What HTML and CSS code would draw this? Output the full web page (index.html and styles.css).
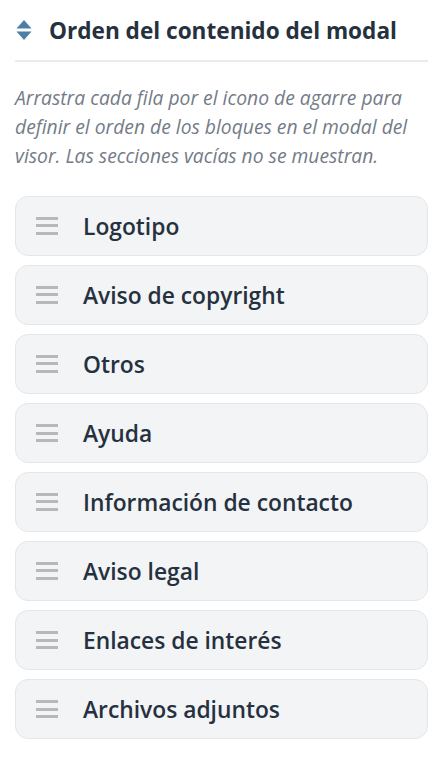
FILE: index.html
```html
<!DOCTYPE html>
<html lang="es">
<head>
    <meta charset="UTF-8">
    <meta name="viewport" content="width=device-width, initial-scale=1.0">
    <title>Orden del contenido del modal</title>
    <link rel="stylesheet" href="styles.css">
</head>
<body>
    <div class="panel">
        <div class="panel-header">
            <svg class="sort-icon" width="16" height="22" viewBox="0 0 16 22">
                <path d="M8 1 L15.5 9.5 H0.5 Z" fill="#4b7fa8"/>
                <path d="M8 21 L15.5 12.5 H0.5 Z" fill="#4b7fa8"/>
            </svg>
            <h2>Orden del contenido del modal</h2>
        </div>

        <p class="hint">Arrastra cada fila por el icono de agarre para definir el orden de los bloques en el modal del visor. Las secciones vacías no se muestran.</p>

        <ul class="order-list">
            <li class="order-item"><span class="grip"></span>Logotipo</li>
            <li class="order-item"><span class="grip"></span>Aviso de copyright</li>
            <li class="order-item"><span class="grip"></span>Otros</li>
            <li class="order-item"><span class="grip"></span>Ayuda</li>
            <li class="order-item"><span class="grip"></span>Información de contacto</li>
            <li class="order-item"><span class="grip"></span>Aviso legal</li>
            <li class="order-item"><span class="grip"></span>Enlaces de interés</li>
            <li class="order-item"><span class="grip"></span>Archivos adjuntos</li>
        </ul>
    </div>
</body>
</html>
```

FILE: styles.css
```css
body {
    margin: 0;
    background-color: #ffffff;
    font-family: "Open Sans", sans-serif;
    color: #263140;
}

.panel {
    padding: 0 14px 0 15px;
}

.panel-header {
    display: flex;
    align-items: center;
    gap: 17px;
    height: 60px;
    border-bottom: 2px solid #e8ecf0;
    padding-left: 1px;
}

.sort-icon {
    flex-shrink: 0;
}

.panel-header h2 {
    margin: 0;
    font-size: 22.6px;
    font-weight: 700;
    color: #263140;
}

.hint {
    margin: 21px 0 26px;
    font-size: 19.3px;
    line-height: 29px;
    font-style: italic;
    color: #737b87;
}

.order-list {
    list-style: none;
    margin: 0;
    padding: 0;
    display: flex;
    flex-direction: column;
    gap: 9px;
}

.order-item {
    display: flex;
    align-items: center;
    height: 58px;
    padding-left: 20px;
    background-color: #f3f4f6;
    border: 1px solid #e3e6ea;
    border-radius: 13px;
    font-size: 22.8px;
    font-weight: 600;
    color: #263140;
}

.grip {
    width: 22px;
    height: 18px;
    margin-right: 25px;
    background: linear-gradient(#b8b8b8 0 3px, transparent 3px 7.5px, #b8b8b8 7.5px 10.5px, transparent 10.5px 15px, #b8b8b8 15px 18px);
}
```
